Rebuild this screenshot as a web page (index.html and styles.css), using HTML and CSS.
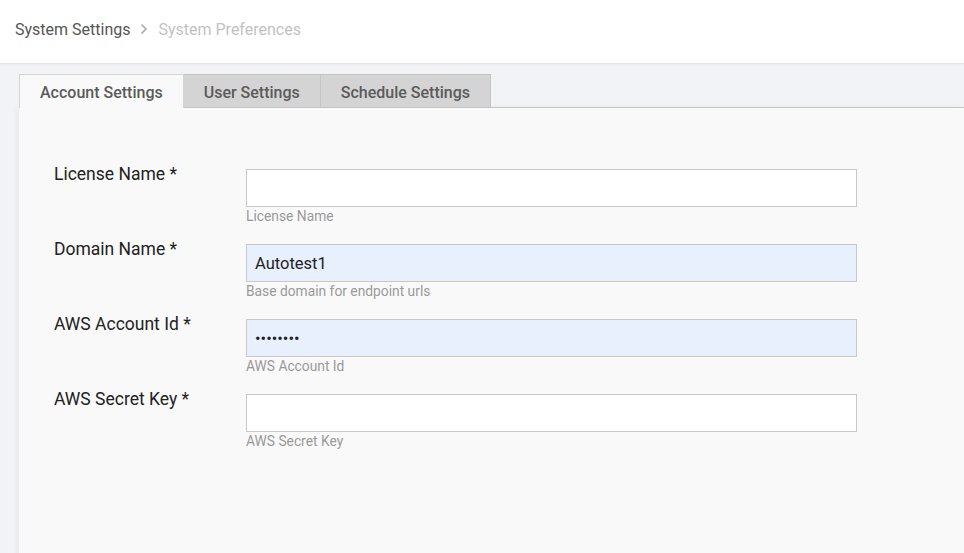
FILE: index.html
```html
<!DOCTYPE html>
<html lang="en">
<head>
    <meta charset="UTF-8">
    <meta name="viewport" content="width=device-width, initial-scale=1.0">
    <title>System Preferences</title>
    <link rel="stylesheet" href="styles.css">
</head>
<body>
    <div class="topbar">
        <div class="crumbs">
            <span class="crumb">System Settings</span>
            <svg class="sep" width="10" height="12" viewBox="0 0 10 12">
                <path d="M2.5 1.5 L7 6 L2.5 10.5" fill="none" stroke="#a9a9a9" stroke-width="1.6"/>
            </svg>
            <span class="crumb current">System Preferences</span>
        </div>
    </div>

    <div class="content">
        <div class="tabs">
            <div class="tab active">Account Settings</div>
            <div class="tab">User Settings</div>
            <div class="tab">Schedule Settings</div>
            <div class="tab-rest"></div>
        </div>
        <div class="panel">
            <div class="row">
                <label class="lbl">License Name *</label>
                <div class="field">
                    <input class="inp" type="text" value="">
                    <div class="hint">License Name</div>
                </div>
            </div>
            <div class="row">
                <label class="lbl">Domain Name *</label>
                <div class="field">
                    <input class="inp filled" type="text" value="Autotest1">
                    <div class="hint">Base domain for endpoint urls</div>
                </div>
            </div>
            <div class="row">
                <label class="lbl">AWS Account Id *</label>
                <div class="field">
                    <input class="inp filled" type="password" value="12345678">
                    <div class="hint">AWS Account Id</div>
                </div>
            </div>
            <div class="row">
                <label class="lbl">AWS Secret Key *</label>
                <div class="field">
                    <input class="inp" type="password" value="">
                    <div class="hint">AWS Secret Key</div>
                </div>
            </div>
        </div>
    </div>
</body>
</html>
```

FILE: styles.css
```css
html, body{
    margin: 0;
    padding: 0;
    height: 100%;
}
body{
    font-family: Roboto, "Liberation Sans", sans-serif;
    background-color: #f1f3f7;
    overflow: hidden;
}
.topbar{
    height: 63px;
    background-color: #fff;
    border-bottom: 1px solid #e4e6ea;
    box-shadow: 0 1px 3px rgba(0,0,0,0.04);
    display: flex;
    align-items: center;
    padding-left: 15px;
}
.crumbs{
    display: flex;
    align-items: center;
    gap: 9px;
    font-size: 16px;
    margin-top: -5px;
}
.crumb{
    color: #555;
}
.crumb.current{
    color: #c2c2c2;
}
.content{
    padding: 10px 0 0 19px;
}
.tabs{
    display: flex;
    height: 34px;
}
.tab{
    box-sizing: border-box;
    height: 34px;
    padding: 0 20px;
    line-height: 35px;
    font-size: 16px;
    font-weight: 500;
    color: #5b5b5b;
    background-color: #d4d4d4;
    border: 1px solid #c4c4c4;
    border-left: none;
}
.tab.active{
    background-color: #f9f9f9;
    border-left: 1px solid #d4d4d4;
    border-color: #d4d4d4;
    border-bottom: none;
}
.tab-rest{
    flex: 1;
    border-bottom: 1px solid #c4c4c4;
}
.panel{
    background-color: #f9f9f9;
    height: 400px;
    padding-top: 56px;
    padding-left: 35px;
    box-shadow: -2px 0 6px rgba(0,0,0,0.05);
}
.row{
    display: flex;
    height: 75px;
}
.lbl{
    width: 192px;
    font-size: 17.5px;
    color: #222;
}
.field{
    display: flex;
    flex-direction: column;
    padding-top: 5px;
}
.inp{
    box-sizing: border-box;
    width: 611px;
    height: 38px;
    border: 1px solid #c8c8c8;
    background-color: #fff;
    padding: 0 8px;
    font-family: Roboto, "Liberation Sans", sans-serif;
    font-size: 16.5px;
    color: #222;
    outline: none;
}
.inp.filled{
    background-color: #e8f0fe;
}
.hint{
    font-size: 13.8px;
    color: #999;
    margin-top: 1px;
}
```
